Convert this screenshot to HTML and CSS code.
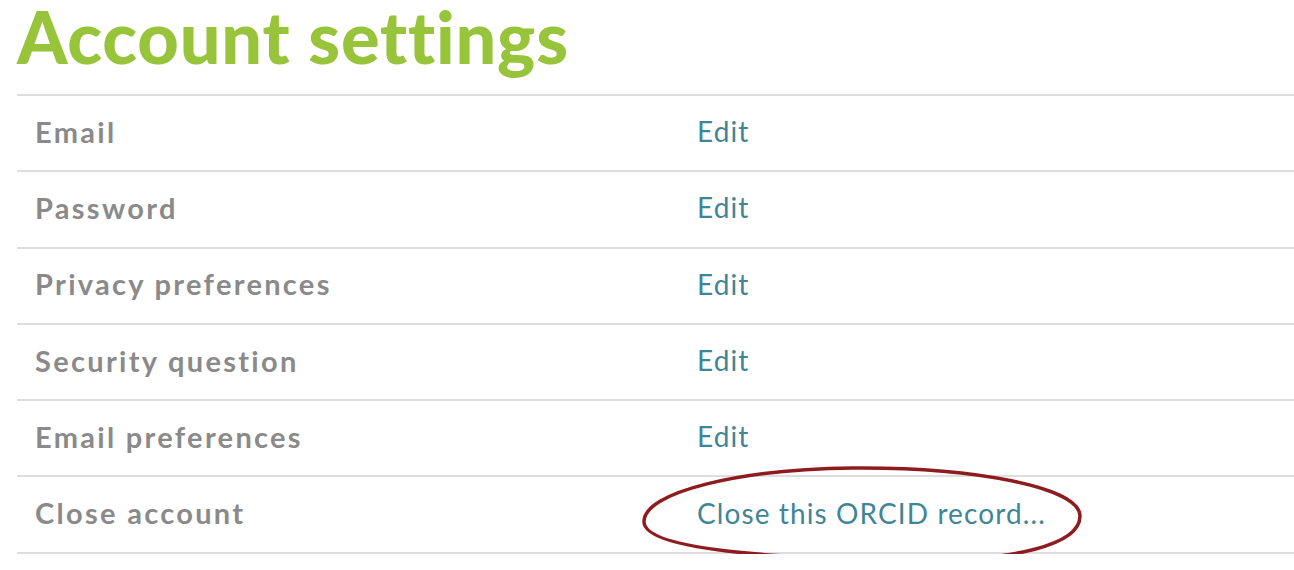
FILE: index.html
```html
<!DOCTYPE html>
<html lang="en">
<head>
  <meta charset="UTF-8">
  <title>Account settings</title>
  <link rel="stylesheet" href="styles.css">
</head>
<body>
  <div class="page">
    <h1>Account settings</h1>
    <div class="settings">
      <div class="row">
        <span class="label">Email</span>
        <a class="action" href="#">Edit</a>
      </div>
      <div class="row">
        <span class="label">Password</span>
        <a class="action" href="#">Edit</a>
      </div>
      <div class="row">
        <span class="label">Privacy preferences</span>
        <a class="action" href="#">Edit</a>
      </div>
      <div class="row">
        <span class="label">Security question</span>
        <a class="action" href="#">Edit</a>
      </div>
      <div class="row">
        <span class="label">Email preferences</span>
        <a class="action" href="#">Edit</a>
      </div>
      <div class="row marked">
        <span class="label">Close account</span>
        <a class="action" href="#">Close this ORCID record...</a>
        <!-- hand-drawn ring around the close link -->
        <svg class="ring" viewBox="0 0 442 98" width="442" height="98">
          <path d="M3 57 C2 27 100 4 212 3 C332 2 439 22 439 51 C439 80 372 96 278 95 C142 94 4 86 3 57 Z" />
        </svg>
      </div>
    </div>
  </div>
</body>
</html>
```

FILE: styles.css
```css
* {
  margin: 0;
  padding: 0;
  box-sizing: border-box;
}

body {
  background-color: #fff;
  font-family: 'Lato', sans-serif;
}

.page {
  padding-left: 17px;
}

h1 {
  font-size: 72px;
  font-weight: 900;
  color: #97c43b;
  line-height: 72px;
  letter-spacing: 0.8px;
  font-variant-ligatures: none;
  margin-bottom: 22px;
}

.settings {
  border-top: 2px solid #dedede;
}

.row {
  display: grid;
  grid-template-columns: 680px 1fr;
  align-items: center;
  height: 76.3px;
  border-bottom: 2px solid #dedede;
  padding-bottom: 4px;
}

.label {
  padding-left: 18px;
  font-size: 29px;
  font-weight: 700;
  color: #8a8a8a;
  letter-spacing: 2.3px;
}

.action {
  font-size: 28px;
  color: #3f8596;
  letter-spacing: 1.1px;
  text-decoration: none;
  justify-self: start;
}

.marked {
  position: relative;
}

.ring {
  position: absolute;
  left: 624px;
  top: -12px;
  overflow: visible;
}

.ring path {
  fill: none;
  stroke: #8e1b1d;
  stroke-width: 3.5px;
}
```
